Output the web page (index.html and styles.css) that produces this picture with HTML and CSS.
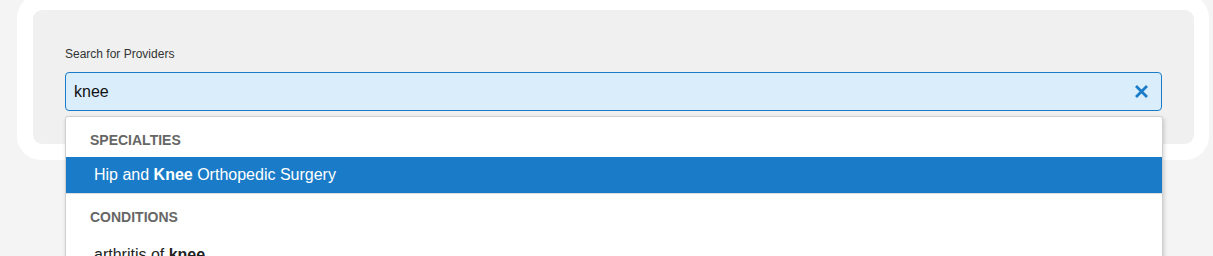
FILE: index.html
```html
<!DOCTYPE html>
<html>
<head>
<meta charset="utf-8">
<link rel="stylesheet" href="styles.css">
</head>
<body>
<div class="card">
  <div class="panel">
    <label class="label">Search for Providers</label>
    <div class="search">
      <div class="input">
        <span class="value">knee</span>
        <svg class="clear" width="15" height="15" viewBox="0 0 15 15"><path d="M2 2 L13 13 M13 2 L2 13" stroke="#1a7cc8" stroke-width="2.8" stroke-linecap="butt" fill="none"/></svg>
      </div>
      <div class="dropdown">
        <div class="group">SPECIALTIES</div>
        <div class="option active">Hip and <b>Knee</b> Orthopedic Surgery</div>
        <div class="group sep">CONDITIONS</div>
        <div class="option">arthritis of <b>knee</b></div>
      </div>
    </div>
  </div>
</div>
</body>
</html>
```
FILE: styles.css
```css
html, body {
  margin: 0;
  padding: 0;
  background: #f4f4f4;
  font-family: "Liberation Sans", Arial, sans-serif;
  height: 256px;
  overflow: hidden;
}
.card {
  margin: -6px 4px 0 17px;
  padding: 16px 15px 16px 16px;
  background: #ffffff;
  border-radius: 24px;
}
.panel {
  background: #f0f0f0;
  border-radius: 9px;
  padding: 37px 32px 33px 32px;
}
.label {
  display: block;
  font-size: 12px;
  line-height: 15px;
  color: #333;
  margin-bottom: 10px;
}
.search {
  position: relative;
}
.input {
  height: 37px;
  border: 1px solid #1a7cc8;
  border-radius: 4px;
  background: #d9edfb;
  display: flex;
  align-items: center;
  justify-content: space-between;
  padding: 0 12px 0 8px;
}
.value {
  font-size: 16px;
  color: #111;
}
.clear {
  display: block;
}
.dropdown {
  position: absolute;
  top: 44px;
  left: 0;
  right: -1px;
  background: #fff;
  border: 1px solid #d0d0d0;
  border-radius: 3px;
  box-shadow: 1px 2px 4px rgba(0,0,0,0.18);
  height: 200px;
}
.group {
  font-size: 14px;
  font-weight: bold;
  color: #666;
  padding: 0 24px;
  height: 40px;
  line-height: 46px;
}
.group.sep {
  border-top: 1px solid #dcdcdc;
  height: 43px;
  line-height: 47px;
}
.option {
  font-size: 16px;
  color: #222;
  padding: 0 28px;
  height: 36px;
  line-height: 36px;
}
.option.active {
  background: #1a7cc8;
  color: #fff;
}
.option b {
  font-weight: bold;
}
```
